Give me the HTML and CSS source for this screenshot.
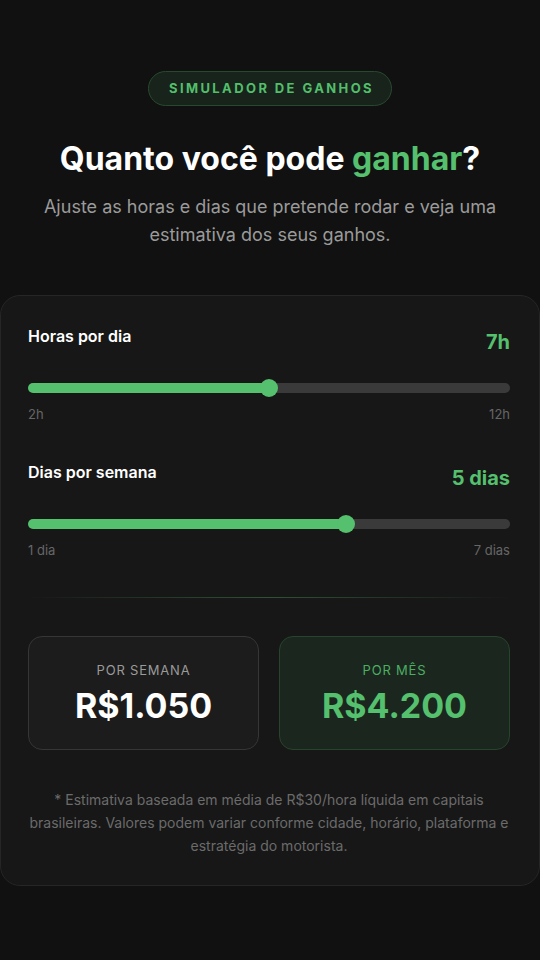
FILE: index.html
```html
<!DOCTYPE html>
<html lang="pt-BR">

<head>
    <meta charset="UTF-8">
    <meta name="viewport" content="width=device-width, initial-scale=1.0">
    <title>Simulador de ganhos</title>
    <link rel="stylesheet" href="styles.css">
</head>

<body>
    <section class="hero">
        <span class="badge">SIMULADOR DE GANHOS</span>
        <h1 class="title">Quanto você pode <span class="green">ganhar</span>?</h1>
        <p class="subtitle">Ajuste as horas e dias que pretende rodar e veja uma estimativa dos seus ganhos.</p>
    </section>

    <div class="card">
        <div class="field">
            <div class="field-head">
                <span class="field-label">Horas por dia</span>
                <span class="field-value" id="hoursVal">7h</span>
            </div>
            <input type="range" class="slider" id="hours" min="2" max="12" value="7" style="--fill: 50%">
            <div class="field-limits">
                <span>2h</span>
                <span>12h</span>
            </div>
        </div>

        <div class="field">
            <div class="field-head">
                <span class="field-label">Dias por semana</span>
                <span class="field-value" id="daysVal">5 dias</span>
            </div>
            <input type="range" class="slider" id="days" min="1" max="7" value="5" style="--fill: 66.67%">
            <div class="field-limits">
                <span>1 dia</span>
                <span>7 dias</span>
            </div>
        </div>

        <div class="divider"></div>

        <div class="results">
            <div class="result">
                <div class="result-label">POR SEMANA</div>
                <div class="result-value" id="week">R$1.050</div>
            </div>
            <div class="result result-month">
                <div class="result-label">POR MÊS</div>
                <div class="result-value" id="month">R$4.200</div>
            </div>
        </div>

        <p class="note">* Estimativa baseada em média de R$30/hora líquida em capitais brasileiras. Valores podem variar conforme cidade, horário, plataforma e estratégia do motorista.</p>
    </div>

    <script>
        var hours = document.querySelector("#hours");
        var days = document.querySelector("#days");

        function fmt(n) {
            return "R$" + n.toLocaleString("pt-BR");
        }

        function update() {
            var h = +hours.value;
            var d = +days.value;
            hours.style.setProperty("--fill", (h - 2) / 10 * 100 + "%");
            days.style.setProperty("--fill", (d - 1) / 6 * 100 + "%");
            document.querySelector("#hoursVal").textContent = h + "h";
            document.querySelector("#daysVal").textContent = d + (d == 1 ? " dia" : " dias");
            document.querySelector("#week").textContent = fmt(h * d * 30);
            document.querySelector("#month").textContent = fmt(h * d * 30 * 4);
        }

        hours.oninput = update;
        days.oninput = update;
    </script>
</body>

</html>
```

FILE: styles.css
```css
* {
    box-sizing: border-box;
}

body {
    margin: 0;
    background: #111111;
    font-family: Inter, "Liberation Sans", sans-serif;
    color: #ffffff;
}

.hero {
    padding: 71px 40px 0;
    text-align: center;
}

.badge {
    display: inline-block;
    height: 35px;
    line-height: 33px;
    padding: 0 17px 0 20px;
    border: 1px solid #274a2f;
    border-radius: 999px;
    background: #18231b;
    color: #52bf6b;
    font-size: 13px;
    font-weight: 700;
    letter-spacing: 2.4px;
}

.title {
    margin: 34px 0 0;
    font-size: 32px;
    line-height: 38px;
    font-weight: 700;
}

.green {
    color: #55c06d;
}

.subtitle {
    margin: 15px 0 0;
    font-size: 18px;
    line-height: 28px;
    color: #9b9b9b;
}

.card {
    margin-top: 46px;
    padding: 28px 29px 28px 27px;
    border: 1px solid #262626;
    border-radius: 20px;
    background: #171717;
}

.field + .field {
    margin-top: 36px;
}

.field-head {
    display: flex;
    justify-content: space-between;
    align-items: flex-start;
}

.field-label {
    font-size: 16px;
    line-height: 24px;
    font-weight: 600;
}

.field-value {
    font-size: 20px;
    line-height: 36px;
    font-weight: 700;
    color: #55c06d;
}

.slider {
    -webkit-appearance: none;
    appearance: none;
    display: block;
    width: 100%;
    height: 18px;
    margin: 19px 0 0;
    background: transparent;
    cursor: pointer;
}

.slider::-webkit-slider-runnable-track {
    height: 10px;
    border-radius: 5px;
    background: linear-gradient(to right, #55c06d var(--fill), #3a3a3a var(--fill));
}

.slider::-webkit-slider-thumb {
    -webkit-appearance: none;
    width: 18px;
    height: 18px;
    margin-top: -4px;
    border-radius: 50%;
    background: #55c06d;
}

.field-limits {
    display: flex;
    justify-content: space-between;
    margin-top: 7px;
    font-size: 13px;
    line-height: 20px;
    color: #666666;
}

.divider {
    height: 1px;
    margin: 37px 0 38px;
    background: linear-gradient(to right, transparent, #2f5236 50%, transparent);
}

.results {
    display: grid;
    grid-template-columns: 1fr 1fr;
    gap: 20px;
}

.result {
    padding: 24px 12px 23px;
    border: 1px solid #363636;
    border-radius: 14px;
    background: #1c1c1c;
    text-align: center;
}

.result-month {
    border-color: #27442d;
    background: #1b271e;
}

.result-label {
    font-size: 13px;
    line-height: 18px;
    letter-spacing: 0.8px;
    color: #9a9a9a;
}

.result-month .result-label {
    color: #4cae63;
}

.result-value {
    margin-top: 7px;
    font-size: 34px;
    line-height: 40px;
    font-weight: 700;
}

.result-month .result-value {
    color: #55c06d;
}

.note {
    margin: 38px 0 0;
    font-size: 14px;
    line-height: 23px;
    color: #6b6b6b;
    text-align: center;
}
```
